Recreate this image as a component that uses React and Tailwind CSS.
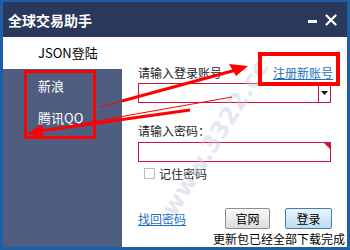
import React from "react";

const cjk = { fontFamily: '"Noto Sans CJK SC", "Microsoft YaHei", sans-serif' };

export default function App() {
  return (
    <div
      className="relative w-[350px] h-[250px] bg-[#1d5fa6] pt-[2px] px-[3px] pb-[3px] overflow-hidden"
      style={cjk}
    >
      <div className="flex flex-col h-full">
        {/* title bar */}
        <div className="h-[35px] bg-[#2a395b] flex items-center justify-between pl-[5px] pr-[10px]">
          <span className="text-white text-[14px] font-bold leading-none">全球交易助手</span>
          <div className="flex items-center gap-[8px] text-white">
            <span className="block w-[9px] h-[3px] bg-white mt-[3px]" />
            <svg width="12" height="12" viewBox="0 0 12 12">
              <path d="M1.5 1.5 L10.5 10.5 M10.5 1.5 L1.5 10.5" stroke="white" strokeWidth="2.2" strokeLinecap="round" />
            </svg>
          </div>
        </div>

        <div className="flex flex-1">
          {/* sidebar */}
          <div className="w-[119px] flex flex-col">
            <div className="h-[32px] bg-white flex items-center pl-[35px] text-[13px] text-black">JSON登陆</div>
            <div className="flex-1 bg-[#4f5e80] pt-[8px] pl-[35px] text-white text-[13px]">
              <div className="h-[18px] leading-[18px]">新浪</div>
              <div className="h-[18px] leading-[18px] mt-[14px]">腾讯QQ</div>
            </div>
          </div>

          {/* main */}
          <div className="flex-1 bg-white pl-[16px] pr-[13px] flex flex-col">
            <div className="mt-[28px] w-[195px] flex justify-between items-center h-[16px] text-[12px]">
              <span className="text-[#222]">请输入登录账号</span>
              <span className="text-[#1b6fc2] underline">注册新账号</span>
            </div>
            <div className="mt-[2px] w-[193px] h-[20px] border border-[#c8173f] flex">
              <div className="flex-1" />
              <div className="w-[12px] border-l border-[#c8173f] flex items-center justify-center">
                <svg width="7" height="4" viewBox="0 0 7 4"><path d="M0 0 H7 L3.5 4 Z" fill="#111" /></svg>
              </div>
            </div>
            <div className="mt-[20px] h-[16px] text-[12px] text-[#222] leading-[16px]">请输入密码：</div>
            <div className="relative mt-[3px] w-[193px] h-[20px] border border-[#c8173f]">
              <svg className="absolute right-0 top-0" width="6" height="6" viewBox="0 0 6 6"><path d="M0 0 H6 V6 Z" fill="#e0102a" /></svg>
            </div>
            <div className="mt-[5px] ml-[6px] flex items-center gap-[4px] h-[13px]">
              <span className="w-[11px] h-[11px] border border-[#b9bdc6] bg-white" />
              <span className="text-[12px] text-[#222]">记住密码</span>
            </div>
            <div className="mt-[28px] flex items-center h-[21px]">
              <span className="text-[12px] text-[#1b6fc2] underline w-[87px]">找回密码</span>
              <button className="w-[45px] h-[21px] border border-[#8d8d8d] rounded-[2px] bg-gradient-to-b from-[#fbfbfb] to-[#dcdcdc] text-[12px] text-black leading-none">官网</button>
              <button className="ml-[15px] w-[47px] h-[21px] border border-[#3c7fb1] rounded-[2px] bg-gradient-to-b from-[#eaf5fd] to-[#bedcf2] text-[12px] text-black leading-none">登录</button>
            </div>
            <div className="mt-auto -mr-[11px] mb-[1px] text-right text-[12px] text-black leading-[14px]">更新包已经全部下载完成</div>
          </div>
        </div>
      </div>

      {/* watermark */}
      <div
        className="absolute left-[126px] top-[120px] text-[24px] font-bold text-[#c3cbe2] opacity-45 -rotate-[58deg] whitespace-nowrap pointer-events-none"
        style={{ fontFamily: '"DejaVu Sans", sans-serif' }}
      >
        www.3322.cc
      </div>

      {/* annotation boxes */}
      <div className="absolute left-[24px] top-[70px] w-[72px] h-[69px] border-[3px] border-[#ff0000] pointer-events-none" />
      <div className="absolute left-[258px] top-[52px] w-[82px] h-[34px] border-[4px] border-[#ff0000] pointer-events-none" />

      {/* annotation arrows */}
      <svg className="absolute inset-0 pointer-events-none" width="350" height="250" viewBox="0 0 350 250">
        <path d="M100 107 L236 70" stroke="#ff0000" strokeWidth="1" />
        <path d="M122 101 L236 70" stroke="#ff0000" strokeWidth="3" />
        <path d="M248 66 L229 64 L236 76 Z" fill="#ff0000" />
        <path d="M232 97 L40 131" stroke="#ff0000" strokeWidth="1" />
        <path d="M190 110 L40 131" stroke="#ff0000" strokeWidth="3" />
        <path d="M27 134 L42 124 L43 137 Z" fill="#ff0000" />
      </svg>
    </div>
  );
}
